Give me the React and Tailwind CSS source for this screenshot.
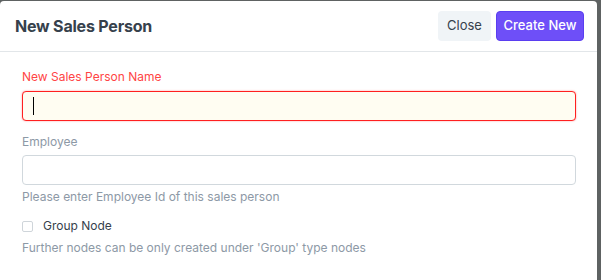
export default function App() {
  return (
    <div className="h-[280px] w-[601px] overflow-hidden bg-[#5e6262] pt-px pr-[4px]" style={{ fontFamily: 'Inter, "Noto Sans", sans-serif' }}>
      <div className="h-[300px] rounded-t-[4px] bg-white">
        <div className="flex h-[51px] items-center justify-between border-b border-[#e2e6e9] pl-[15px] pr-[13px]">
          <h2 className="text-[16px] font-bold tracking-[-0.2px] text-[#36414c]">New Sales Person</h2>
          <div className="flex gap-[5px]">
            <button className="h-[30px] w-[53px] rounded-[4px] bg-[#f0f4f7] text-center text-[13px] text-[#36414c]">Close</button>
            <button className="h-[30px] w-[88px] rounded-[4px] border border-[#5a3ef0] bg-[#6e4ff8] text-center text-[13px] font-medium text-white">Create New</button>
          </div>
        </div>
        <div className="pl-[22px] pr-[21px] pt-[17px] text-[12px] leading-[16px]">
          <label className="block text-[#ff4545]">New Sales Person Name</label>
          <div className="mt-[6px] flex h-[30px] items-center rounded-[4px] border border-[#ff2020] bg-[#fffdf2] pl-[10px] shadow-[0_0_2px_rgba(255,0,0,0.4)]">
            <span className="h-[18px] w-px bg-black" />
          </div>
          <label className="mt-[13px] block text-[#8d99a6]">Employee</label>
          <div className="mt-[5px] h-[30px] rounded-[4px] border border-[#d1d8dd] bg-white" />
          <p className="mt-[4px] text-[#8d99a6]">Please enter Employee Id of this sales person</p>
          <div className="mt-[13px] flex items-center gap-[10px]">
            <span className="h-[11px] w-[11px] rounded-[2px] border border-[#cfd5da] bg-white" />
            <span className="text-[#36414c]">Group Node</span>
          </div>
          <p className="mt-[6px] text-[#8d99a6]">Further nodes can be only created under 'Group' type nodes</p>
        </div>
      </div>
    </div>
  )
}
